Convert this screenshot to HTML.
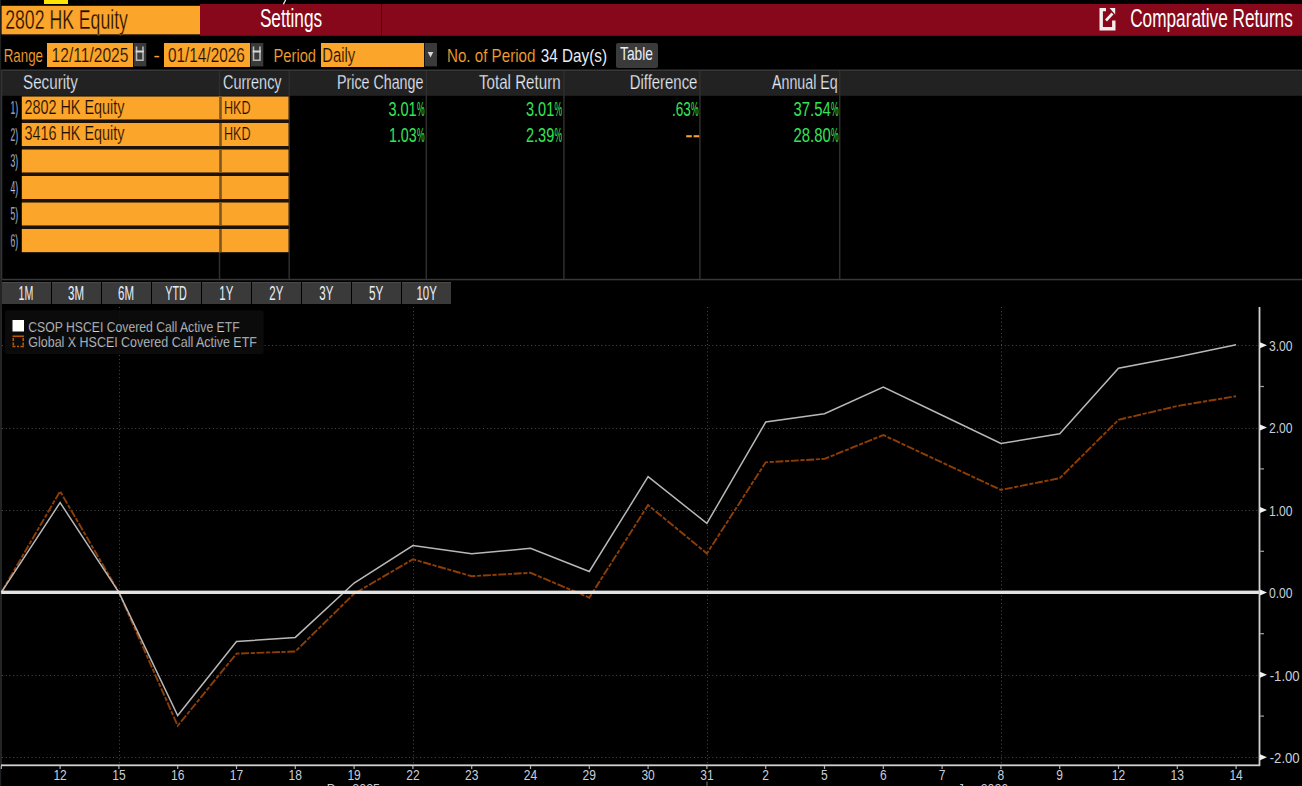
<!DOCTYPE html>
<html><head><meta charset="utf-8"><style>
html,body{margin:0;padding:0;background:#000;width:1302px;height:786px;overflow:hidden}
svg{display:block;font-family:"Liberation Sans", sans-serif}
</style></head><body>
<svg width="1302" height="786" viewBox="0 0 1302 786">
<rect width="1302" height="786" fill="#000"/>
<rect x="44" y="0" width="24" height="4" fill="#ffe600"/>
<rect x="0" y="0" width="1.2" height="786" fill="#1e2124"/>
<rect x="1.6" y="5.8" width="198.4" height="28.2" fill="#fca52b"/>
<rect x="1.6" y="34" width="198.4" height="1.2" fill="#5a3a10"/>
<rect x="200" y="4" width="1102" height="31.8" fill="#87081b"/>
<rect x="381" y="4" width="1" height="32" fill="#55000e"/>
<text x="5.2" y="29" font-size="26.8" fill="#1a1000" text-anchor="start" font-weight="normal" textLength="122.7" lengthAdjust="spacingAndGlyphs" stroke="#fca52b" stroke-width="0.35" >2802 HK Equity</text>
<text x="259.9" y="27.3" font-size="25.2" fill="#ffffff" text-anchor="start" font-weight="normal" textLength="62.2" lengthAdjust="spacingAndGlyphs" >Settings</text>
<path d="M1106 9.6 H1101.2 V28.7 H1113.8 V20.6" stroke="#f4eeee" stroke-width="3.4" fill="none"/>
<path d="M1106 20.5 L1112.5 13.5" stroke="#f4eeee" stroke-width="2.6" fill="none"/>
<path d="M1109.5 7.9 H1115.2 V14.5 Z" fill="#f4eeee"/>
<text x="1130.2" y="27.3" font-size="25" fill="#ffffff" text-anchor="start" font-weight="normal" textLength="162.6" lengthAdjust="spacingAndGlyphs" >Comparative Returns</text>
<text x="3.7" y="62.4" font-size="18.6" fill="#f7a030" text-anchor="start" font-weight="normal" textLength="39.3" lengthAdjust="spacingAndGlyphs" stroke="#000" stroke-width="0.15" >Range</text>
<rect x="47" y="43" width="86" height="24" fill="#fca52b"/>
<text x="51.6" y="62.4" font-size="19.4" fill="#1a1000" text-anchor="start" font-weight="normal" textLength="76.8" lengthAdjust="spacingAndGlyphs" stroke="#fca52b" stroke-width="0.2" >12/11/2025</text>
<rect x="133.7" y="43" width="12.6" height="23.4" fill="#3a3a3a"/><path d="M136.5 46.5 V60.3 H143.0 V46.5" stroke="#b8b8b8" stroke-width="1.6" fill="none"/><rect x="135.7" y="50.5" width="8.1" height="2" fill="#d8d8d8"/>
<rect x="164" y="43" width="86" height="24" fill="#fca52b"/>
<text x="168" y="62.4" font-size="19.4" fill="#1a1000" text-anchor="start" font-weight="normal" textLength="76.8" lengthAdjust="spacingAndGlyphs" stroke="#fca52b" stroke-width="0.2" >01/14/2026</text>
<rect x="250.7" y="43" width="12.6" height="23.4" fill="#3a3a3a"/><path d="M253.5 46.5 V60.3 H260.0 V46.5" stroke="#b8b8b8" stroke-width="1.6" fill="none"/><rect x="252.7" y="50.5" width="8.1" height="2" fill="#d8d8d8"/>
<text x="153.5" y="62.4" font-size="19" fill="#f7a030" text-anchor="start" font-weight="normal" >-</text>
<text x="273.5" y="62.4" font-size="18.6" fill="#f7a030" text-anchor="start" font-weight="normal" textLength="42.5" lengthAdjust="spacingAndGlyphs" stroke="#000" stroke-width="0.15" >Period</text>
<rect x="321" y="43" width="103" height="24" fill="#fca52b"/>
<text x="322.2" y="62.4" font-size="19.4" fill="#1a1000" text-anchor="start" font-weight="normal" textLength="33" lengthAdjust="spacingAndGlyphs" stroke="#fca52b" stroke-width="0.2" >Daily</text>
<rect x="424.7" y="43" width="12.3" height="23.4" fill="#3a3a3a"/>
<path d="M427.7 52 H433.3 L430.5 57.6 Z" fill="#d8d8d8"/>
<text x="447" y="62.4" font-size="18.6" fill="#f7a030" text-anchor="start" font-weight="normal" textLength="88.4" lengthAdjust="spacingAndGlyphs" stroke="#000" stroke-width="0.15" >No. of Period</text>
<text x="540.7" y="62.2" font-size="18.6" fill="#e8eef8" text-anchor="start" font-weight="normal" textLength="66.3" lengthAdjust="spacingAndGlyphs" >34 Day(s)</text>
<rect x="616" y="43" width="42" height="25" rx="2" fill="#3a3a3a"/>
<text x="620" y="59.9" font-size="17.8" fill="#e8eef8" text-anchor="start" font-weight="normal" textLength="33" lengthAdjust="spacingAndGlyphs" >Table</text>
<rect x="2" y="69.5" width="1300" height="2" fill="#383838"/>
<rect x="2" y="71.5" width="1300" height="24.3" fill="#222222"/>
<rect x="0.8" y="69.5" width="1.5" height="210" fill="#333333"/>
<rect x="2" y="278.8" width="1300" height="1.5" fill="#3a3a3a"/>
<rect x="218.75" y="71" width="1.5" height="208" fill="#2e2e2e"/>
<rect x="288.45" y="71" width="1.5" height="208" fill="#2e2e2e"/>
<rect x="425.55" y="71" width="1.5" height="208" fill="#2e2e2e"/>
<rect x="563.15" y="71" width="1.5" height="208" fill="#2e2e2e"/>
<rect x="699.15" y="71" width="1.5" height="208" fill="#2e2e2e"/>
<rect x="838.95" y="71" width="1.5" height="208" fill="#2e2e2e"/>
<text x="23" y="89.4" font-size="20" fill="#e8eef8" text-anchor="start" font-weight="normal" textLength="54.9" lengthAdjust="spacingAndGlyphs" stroke="#222222" stroke-width="0.25" >Security</text>
<text x="223" y="89.4" font-size="20" fill="#e8eef8" text-anchor="start" font-weight="normal" textLength="58.6" lengthAdjust="spacingAndGlyphs" stroke="#222222" stroke-width="0.25" >Currency</text>
<text x="337" y="89.4" font-size="20" fill="#e8eef8" text-anchor="start" font-weight="normal" textLength="86.4" lengthAdjust="spacingAndGlyphs" stroke="#222222" stroke-width="0.25" >Price Change</text>
<text x="479" y="89.4" font-size="20" fill="#e8eef8" text-anchor="start" font-weight="normal" textLength="81.6" lengthAdjust="spacingAndGlyphs" stroke="#222222" stroke-width="0.25" >Total Return</text>
<text x="629.7" y="89.4" font-size="20" fill="#e8eef8" text-anchor="start" font-weight="normal" textLength="67.7" lengthAdjust="spacingAndGlyphs" stroke="#222222" stroke-width="0.25" >Difference</text>
<text x="772" y="89.4" font-size="20" fill="#e8eef8" text-anchor="start" font-weight="normal" textLength="65.7" lengthAdjust="spacingAndGlyphs" stroke="#222222" stroke-width="0.25" >Annual Eq</text>
<rect x="21.8" y="96.5" width="266.7" height="23.2" fill="#fca52b"/>
<rect x="21.8" y="119.7" width="266.7" height="3.3" fill="#1c120a"/>
<rect x="219.2" y="96.5" width="2.6" height="23.2" fill="#7e5621"/>
<text x="10.6" y="114.3" font-size="19" fill="#c8d4ec" text-anchor="start" font-weight="normal" textLength="7.6" lengthAdjust="spacingAndGlyphs" stroke="#000" stroke-width="0.3" >1)</text>
<rect x="21.8" y="123.0" width="266.7" height="23.2" fill="#fca52b"/>
<rect x="21.8" y="146.2" width="266.7" height="3.3" fill="#1c120a"/>
<rect x="219.2" y="123.0" width="2.6" height="23.2" fill="#7e5621"/>
<text x="10.6" y="140.8" font-size="19" fill="#c8d4ec" text-anchor="start" font-weight="normal" textLength="7.6" lengthAdjust="spacingAndGlyphs" stroke="#000" stroke-width="0.3" >2)</text>
<rect x="21.8" y="149.5" width="266.7" height="23.2" fill="#fca52b"/>
<rect x="21.8" y="172.7" width="266.7" height="3.3" fill="#1c120a"/>
<rect x="219.2" y="149.5" width="2.6" height="23.2" fill="#7e5621"/>
<text x="10.6" y="167.3" font-size="19" fill="#c8d4ec" text-anchor="start" font-weight="normal" textLength="7.6" lengthAdjust="spacingAndGlyphs" stroke="#000" stroke-width="0.3" >3)</text>
<rect x="21.8" y="176.0" width="266.7" height="23.2" fill="#fca52b"/>
<rect x="21.8" y="199.2" width="266.7" height="3.3" fill="#1c120a"/>
<rect x="219.2" y="176.0" width="2.6" height="23.2" fill="#7e5621"/>
<text x="10.6" y="193.8" font-size="19" fill="#c8d4ec" text-anchor="start" font-weight="normal" textLength="7.6" lengthAdjust="spacingAndGlyphs" stroke="#000" stroke-width="0.3" >4)</text>
<rect x="21.8" y="202.5" width="266.7" height="23.2" fill="#fca52b"/>
<rect x="21.8" y="225.7" width="266.7" height="3.3" fill="#1c120a"/>
<rect x="219.2" y="202.5" width="2.6" height="23.2" fill="#7e5621"/>
<text x="10.6" y="220.3" font-size="19" fill="#c8d4ec" text-anchor="start" font-weight="normal" textLength="7.6" lengthAdjust="spacingAndGlyphs" stroke="#000" stroke-width="0.3" >5)</text>
<rect x="21.8" y="229.0" width="266.7" height="23.2" fill="#fca52b"/>
<rect x="219.2" y="229.0" width="2.6" height="23.2" fill="#7e5621"/>
<text x="10.6" y="246.8" font-size="19" fill="#c8d4ec" text-anchor="start" font-weight="normal" textLength="7.6" lengthAdjust="spacingAndGlyphs" stroke="#000" stroke-width="0.3" >6)</text>
<text x="24.4" y="113.6" font-size="20" fill="#1a1000" text-anchor="start" font-weight="normal" textLength="100" lengthAdjust="spacingAndGlyphs" stroke="#fca52b" stroke-width="0.2" >2802 HK Equity</text>
<text x="224" y="113.6" font-size="19" fill="#1a1000" text-anchor="start" font-weight="normal" textLength="26.6" lengthAdjust="spacingAndGlyphs" stroke="#fca52b" stroke-width="0.2" >HKD</text>
<text x="24.4" y="140.1" font-size="20" fill="#1a1000" text-anchor="start" font-weight="normal" textLength="100" lengthAdjust="spacingAndGlyphs" stroke="#fca52b" stroke-width="0.2" >3416 HK Equity</text>
<text x="224" y="140.1" font-size="19" fill="#1a1000" text-anchor="start" font-weight="normal" textLength="26.6" lengthAdjust="spacingAndGlyphs" stroke="#fca52b" stroke-width="0.2" >HKD</text>
<text x="388.4" y="115.8" font-size="20" fill="#34e454" text-anchor="start" font-weight="normal" textLength="28.3" lengthAdjust="spacingAndGlyphs" >3.01</text>
<text x="416.9" y="115.8" font-size="20" fill="#34e454" text-anchor="start" font-weight="normal" textLength="7.6" lengthAdjust="spacingAndGlyphs" >%</text>
<text x="526" y="115.8" font-size="20" fill="#34e454" text-anchor="start" font-weight="normal" textLength="28.2" lengthAdjust="spacingAndGlyphs" >3.01</text>
<text x="554.4" y="115.8" font-size="20" fill="#34e454" text-anchor="start" font-weight="normal" textLength="7.6" lengthAdjust="spacingAndGlyphs" >%</text>
<text x="672" y="115.8" font-size="20" fill="#34e454" text-anchor="start" font-weight="normal" textLength="18.9" lengthAdjust="spacingAndGlyphs" >.63</text>
<text x="691.1" y="115.8" font-size="20" fill="#34e454" text-anchor="start" font-weight="normal" textLength="7.6" lengthAdjust="spacingAndGlyphs" >%</text>
<text x="793.6" y="115.8" font-size="20" fill="#34e454" text-anchor="start" font-weight="normal" textLength="37.1" lengthAdjust="spacingAndGlyphs" >37.54</text>
<text x="830.9" y="115.8" font-size="20" fill="#34e454" text-anchor="start" font-weight="normal" textLength="7.6" lengthAdjust="spacingAndGlyphs" >%</text>
<text x="389" y="141.9" font-size="20" fill="#34e454" text-anchor="start" font-weight="normal" textLength="27.7" lengthAdjust="spacingAndGlyphs" >1.03</text>
<text x="416.9" y="141.9" font-size="20" fill="#34e454" text-anchor="start" font-weight="normal" textLength="7.6" lengthAdjust="spacingAndGlyphs" >%</text>
<text x="526" y="141.9" font-size="20" fill="#34e454" text-anchor="start" font-weight="normal" textLength="28.2" lengthAdjust="spacingAndGlyphs" >2.39</text>
<text x="554.4" y="141.9" font-size="20" fill="#34e454" text-anchor="start" font-weight="normal" textLength="7.6" lengthAdjust="spacingAndGlyphs" >%</text>
<rect x="686.2" y="135.2" width="5.6" height="2.1" fill="#f7a030"/><rect x="693.6" y="135.2" width="5.6" height="2.1" fill="#f7a030"/>
<text x="793.6" y="141.9" font-size="20" fill="#34e454" text-anchor="start" font-weight="normal" textLength="37.1" lengthAdjust="spacingAndGlyphs" >28.80</text>
<text x="830.9" y="141.9" font-size="20" fill="#34e454" text-anchor="start" font-weight="normal" textLength="7.6" lengthAdjust="spacingAndGlyphs" >%</text>
<rect x="2" y="282" width="49" height="22" fill="#3a3a3a"/>
<rect x="2" y="282" width="49" height="1" fill="#4a4a4a"/>
<text x="18.6" y="300.1" font-size="20" fill="#e8eef8" text-anchor="start" font-weight="normal" textLength="14.8" lengthAdjust="spacingAndGlyphs" >1M</text>
<rect x="52" y="282" width="49" height="22" fill="#3a3a3a"/>
<rect x="52" y="282" width="49" height="1" fill="#4a4a4a"/>
<text x="68" y="300.1" font-size="20" fill="#e8eef8" text-anchor="start" font-weight="normal" textLength="16" lengthAdjust="spacingAndGlyphs" >3M</text>
<rect x="102" y="282" width="49" height="22" fill="#3a3a3a"/>
<rect x="102" y="282" width="49" height="1" fill="#4a4a4a"/>
<text x="118" y="300.1" font-size="20" fill="#e8eef8" text-anchor="start" font-weight="normal" textLength="16" lengthAdjust="spacingAndGlyphs" >6M</text>
<rect x="152" y="282" width="49" height="22" fill="#3a3a3a"/>
<rect x="152" y="282" width="49" height="1" fill="#4a4a4a"/>
<text x="165.3" y="300.1" font-size="20" fill="#e8eef8" text-anchor="start" font-weight="normal" textLength="21.5" lengthAdjust="spacingAndGlyphs" >YTD</text>
<rect x="202" y="282" width="49" height="22" fill="#3a3a3a"/>
<rect x="202" y="282" width="49" height="1" fill="#4a4a4a"/>
<text x="219.3" y="300.1" font-size="20" fill="#e8eef8" text-anchor="start" font-weight="normal" textLength="14" lengthAdjust="spacingAndGlyphs" >1Y</text>
<rect x="252" y="282" width="49" height="22" fill="#3a3a3a"/>
<rect x="252" y="282" width="49" height="1" fill="#4a4a4a"/>
<text x="269.3" y="300.1" font-size="20" fill="#e8eef8" text-anchor="start" font-weight="normal" textLength="14" lengthAdjust="spacingAndGlyphs" >2Y</text>
<rect x="302" y="282" width="49" height="22" fill="#3a3a3a"/>
<rect x="302" y="282" width="49" height="1" fill="#4a4a4a"/>
<text x="319.3" y="300.1" font-size="20" fill="#e8eef8" text-anchor="start" font-weight="normal" textLength="14" lengthAdjust="spacingAndGlyphs" >3Y</text>
<rect x="352" y="282" width="49" height="22" fill="#3a3a3a"/>
<rect x="352" y="282" width="49" height="1" fill="#4a4a4a"/>
<text x="369" y="300.1" font-size="20" fill="#e8eef8" text-anchor="start" font-weight="normal" textLength="14.4" lengthAdjust="spacingAndGlyphs" >5Y</text>
<rect x="402" y="282" width="49" height="22" fill="#3a3a3a"/>
<rect x="402" y="282" width="49" height="1" fill="#4a4a4a"/>
<text x="416.4" y="300.1" font-size="20" fill="#e8eef8" text-anchor="start" font-weight="normal" textLength="20.4" lengthAdjust="spacingAndGlyphs" >10Y</text>
<rect x="0.5" y="279" width="1.5" height="487" fill="#262626"/>
<line x1="2" y1="345.5" x2="1259" y2="345.5" stroke="#4a4a4a" stroke-width="1" stroke-dasharray="1 2.7"/>
<line x1="2" y1="428.5" x2="1259" y2="428.5" stroke="#4a4a4a" stroke-width="1" stroke-dasharray="1 2.7"/>
<line x1="2" y1="510.5" x2="1259" y2="510.5" stroke="#4a4a4a" stroke-width="1" stroke-dasharray="1 2.7"/>
<line x1="2" y1="675.5" x2="1259" y2="675.5" stroke="#4a4a4a" stroke-width="1" stroke-dasharray="1 2.7"/>
<line x1="2" y1="757.5" x2="1259" y2="757.5" stroke="#4a4a4a" stroke-width="1" stroke-dasharray="1 2.7"/>
<line x1="119.5" y1="307" x2="119.5" y2="765" stroke="#4a4a4a" stroke-width="1" stroke-dasharray="1 2.7"/>
<line x1="413.5" y1="307" x2="413.5" y2="765" stroke="#4a4a4a" stroke-width="1" stroke-dasharray="1 2.7"/>
<line x1="707.5" y1="307" x2="707.5" y2="765" stroke="#4a4a4a" stroke-width="1" stroke-dasharray="1 2.7"/>
<line x1="1001.5" y1="307" x2="1001.5" y2="765" stroke="#4a4a4a" stroke-width="1" stroke-dasharray="1 2.7"/>
<rect x="5" y="310.3" width="258.7" height="43.8" rx="3" fill="#0d0d0d" fill-opacity="0.85"/>
<rect x="12.5" y="320" width="11.5" height="11.5" fill="#ffffff"/>
<rect x="12.5" y="335.5" width="11.5" height="1.6" fill="#b85806"/>
<path d="M13.3 338 V346.5 M23.2 338 V346.5" stroke="#b85806" stroke-width="1.6" stroke-dasharray="3 1.5"/>
<path d="M12.5 346.5 H15.5 M17 346.5 H19 M20.5 346.5 H24" stroke="#b85806" stroke-width="1.6"/>
<path d="M285.6 0 L283.4 4.2" stroke="#e8ecf4" stroke-width="1.3"/>
<text x="28.3" y="331.7" font-size="14" fill="#d0d4dc" text-anchor="start" font-weight="normal" textLength="211.3" lengthAdjust="spacingAndGlyphs" stroke="#0d0d0d" stroke-width="0.25" >CSOP HSCEI Covered Call Active ETF</text>
<text x="28.3" y="347.3" font-size="14" fill="#d0d4dc" text-anchor="start" font-weight="normal" textLength="228.6" lengthAdjust="spacingAndGlyphs" stroke="#0d0d0d" stroke-width="0.25" >Global X HSCEI Covered Call Active ETF</text>
<polyline points="1.3,592.4 60.1,491.3 118.9,592.4 177.7,725.8 236.5,653.6 295.3,651.5 354.1,593.7 412.9,559.3 471.7,576.2 530.5,572.8 589.3,597.7 648.1,505.0 706.9,553.5 765.7,462.3 824.5,458.9 883.3,435.0 942.1,462.5 1000.9,489.9 1059.7,478.2 1118.5,419.8 1177.3,406.0 1236.1,396.2" fill="none" stroke="#8e3e05" stroke-width="1.9" stroke-dasharray="8 1.6 4.2 1.6"/>
<polyline points="1.3,592.4 60.1,502.6 118.9,592.4 177.7,715.5 236.5,641.5 295.3,637.4 354.1,583.0 412.9,545.5 471.7,553.8 530.5,548.3 589.3,571.5 648.1,476.7 706.9,523.4 765.7,422.0 824.5,413.8 883.3,387.0 942.1,415.2 1000.9,443.5 1059.7,433.7 1118.5,368.2 1177.3,357.0 1236.1,344.8" fill="none" stroke="#b8b8b8" stroke-width="1.5"/>
<rect x="1.2" y="590.6" width="1258" height="3.4" fill="#e2e2e2"/>
<rect x="1258.6" y="307" width="1.8" height="459" fill="#d0d0d0"/>
<rect x="1" y="764.4" width="1259" height="1.8" fill="#d0d0d0"/>
<path d="M1260 342.2 L1267 345.2 L1260 348.2 Z" fill="#f0f0f0"/>
<text x="1269" y="350.8999999999999" font-size="14.5" fill="#c8ced8" text-anchor="start" font-weight="normal" textLength="23.6" lengthAdjust="spacingAndGlyphs" >3.00</text>
<path d="M1260 424.6 L1267 427.6 L1260 430.6 Z" fill="#f0f0f0"/>
<text x="1269" y="433.29999999999995" font-size="14.5" fill="#c8ced8" text-anchor="start" font-weight="normal" textLength="23.6" lengthAdjust="spacingAndGlyphs" >2.00</text>
<path d="M1260 507.0 L1267 510.0 L1260 513.0 Z" fill="#f0f0f0"/>
<text x="1269" y="515.7" font-size="14.5" fill="#c8ced8" text-anchor="start" font-weight="normal" textLength="23.6" lengthAdjust="spacingAndGlyphs" >1.00</text>
<path d="M1260 589.4 L1267 592.4 L1260 595.4 Z" fill="#f0f0f0"/>
<text x="1269" y="598.1" font-size="14.5" fill="#c8ced8" text-anchor="start" font-weight="normal" textLength="23.6" lengthAdjust="spacingAndGlyphs" >0.00</text>
<path d="M1260 671.8 L1267 674.8 L1260 677.8 Z" fill="#f0f0f0"/>
<text x="1269.7" y="680.5" font-size="14.5" fill="#c8ced8" text-anchor="start" font-weight="normal" textLength="30" lengthAdjust="spacingAndGlyphs" >-1.00</text>
<path d="M1260 754.2 L1267 757.2 L1260 760.2 Z" fill="#f0f0f0"/>
<text x="1269.7" y="762.9000000000001" font-size="14.5" fill="#c8ced8" text-anchor="start" font-weight="normal" textLength="30" lengthAdjust="spacingAndGlyphs" >-2.00</text>
<rect x="1260" y="385.9" width="4" height="1.2" fill="#a0a0a0"/>
<rect x="1260" y="468.3" width="4" height="1.2" fill="#a0a0a0"/>
<rect x="1260" y="550.7" width="4" height="1.2" fill="#a0a0a0"/>
<rect x="1260" y="633.1" width="4" height="1.2" fill="#a0a0a0"/>
<rect x="1260" y="715.5" width="4" height="1.2" fill="#a0a0a0"/>
<rect x="0.7" y="766" width="1.2" height="3" fill="#b0b0b0"/>
<rect x="59.5" y="766" width="1.2" height="3" fill="#b0b0b0"/>
<text x="53.4" y="780.2" font-size="15.5" fill="#c8ced8" text-anchor="start" font-weight="normal" textLength="13.4" lengthAdjust="spacingAndGlyphs" >12</text>
<rect x="118.3" y="766" width="1.2" height="3" fill="#b0b0b0"/>
<text x="112.2" y="780.2" font-size="15.5" fill="#c8ced8" text-anchor="start" font-weight="normal" textLength="13.4" lengthAdjust="spacingAndGlyphs" >15</text>
<rect x="177.1" y="766" width="1.2" height="3" fill="#b0b0b0"/>
<text x="171.0" y="780.2" font-size="15.5" fill="#c8ced8" text-anchor="start" font-weight="normal" textLength="13.4" lengthAdjust="spacingAndGlyphs" >16</text>
<rect x="235.9" y="766" width="1.2" height="3" fill="#b0b0b0"/>
<text x="229.8" y="780.2" font-size="15.5" fill="#c8ced8" text-anchor="start" font-weight="normal" textLength="13.4" lengthAdjust="spacingAndGlyphs" >17</text>
<rect x="294.7" y="766" width="1.2" height="3" fill="#b0b0b0"/>
<text x="288.6" y="780.2" font-size="15.5" fill="#c8ced8" text-anchor="start" font-weight="normal" textLength="13.4" lengthAdjust="spacingAndGlyphs" >18</text>
<rect x="353.5" y="766" width="1.2" height="3" fill="#b0b0b0"/>
<text x="347.4" y="780.2" font-size="15.5" fill="#c8ced8" text-anchor="start" font-weight="normal" textLength="13.4" lengthAdjust="spacingAndGlyphs" >19</text>
<rect x="412.3" y="766" width="1.2" height="3" fill="#b0b0b0"/>
<text x="406.2" y="780.2" font-size="15.5" fill="#c8ced8" text-anchor="start" font-weight="normal" textLength="13.4" lengthAdjust="spacingAndGlyphs" >22</text>
<rect x="471.1" y="766" width="1.2" height="3" fill="#b0b0b0"/>
<text x="465.0" y="780.2" font-size="15.5" fill="#c8ced8" text-anchor="start" font-weight="normal" textLength="13.4" lengthAdjust="spacingAndGlyphs" >23</text>
<rect x="529.9" y="766" width="1.2" height="3" fill="#b0b0b0"/>
<text x="523.8" y="780.2" font-size="15.5" fill="#c8ced8" text-anchor="start" font-weight="normal" textLength="13.4" lengthAdjust="spacingAndGlyphs" >24</text>
<rect x="588.7" y="766" width="1.2" height="3" fill="#b0b0b0"/>
<text x="582.6" y="780.2" font-size="15.5" fill="#c8ced8" text-anchor="start" font-weight="normal" textLength="13.4" lengthAdjust="spacingAndGlyphs" >29</text>
<rect x="647.5" y="766" width="1.2" height="3" fill="#b0b0b0"/>
<text x="641.4" y="780.2" font-size="15.5" fill="#c8ced8" text-anchor="start" font-weight="normal" textLength="13.4" lengthAdjust="spacingAndGlyphs" >30</text>
<rect x="706.3" y="766" width="1.2" height="3" fill="#b0b0b0"/>
<text x="700.2" y="780.2" font-size="15.5" fill="#c8ced8" text-anchor="start" font-weight="normal" textLength="13.4" lengthAdjust="spacingAndGlyphs" >31</text>
<rect x="765.1" y="766" width="1.2" height="3" fill="#b0b0b0"/>
<text x="762.3" y="780.2" font-size="15.5" fill="#c8ced8" text-anchor="start" font-weight="normal" textLength="6.7" lengthAdjust="spacingAndGlyphs" >2</text>
<rect x="823.9" y="766" width="1.2" height="3" fill="#b0b0b0"/>
<text x="821.1" y="780.2" font-size="15.5" fill="#c8ced8" text-anchor="start" font-weight="normal" textLength="6.7" lengthAdjust="spacingAndGlyphs" >5</text>
<rect x="882.7" y="766" width="1.2" height="3" fill="#b0b0b0"/>
<text x="879.9" y="780.2" font-size="15.5" fill="#c8ced8" text-anchor="start" font-weight="normal" textLength="6.7" lengthAdjust="spacingAndGlyphs" >6</text>
<rect x="941.5" y="766" width="1.2" height="3" fill="#b0b0b0"/>
<text x="938.7" y="780.2" font-size="15.5" fill="#c8ced8" text-anchor="start" font-weight="normal" textLength="6.7" lengthAdjust="spacingAndGlyphs" >7</text>
<rect x="1000.3" y="766" width="1.2" height="3" fill="#b0b0b0"/>
<text x="997.5" y="780.2" font-size="15.5" fill="#c8ced8" text-anchor="start" font-weight="normal" textLength="6.7" lengthAdjust="spacingAndGlyphs" >8</text>
<rect x="1059.1" y="766" width="1.2" height="3" fill="#b0b0b0"/>
<text x="1056.3" y="780.2" font-size="15.5" fill="#c8ced8" text-anchor="start" font-weight="normal" textLength="6.7" lengthAdjust="spacingAndGlyphs" >9</text>
<rect x="1117.9" y="766" width="1.2" height="3" fill="#b0b0b0"/>
<text x="1111.8" y="780.2" font-size="15.5" fill="#c8ced8" text-anchor="start" font-weight="normal" textLength="13.4" lengthAdjust="spacingAndGlyphs" >12</text>
<rect x="1176.7" y="766" width="1.2" height="3" fill="#b0b0b0"/>
<text x="1170.6" y="780.2" font-size="15.5" fill="#c8ced8" text-anchor="start" font-weight="normal" textLength="13.4" lengthAdjust="spacingAndGlyphs" >13</text>
<rect x="1235.5" y="766" width="1.2" height="3" fill="#b0b0b0"/>
<text x="1229.4" y="780.2" font-size="15.5" fill="#c8ced8" text-anchor="start" font-weight="normal" textLength="13.4" lengthAdjust="spacingAndGlyphs" >14</text>
<rect x="706.3" y="781.5" width="1.4" height="4.5" fill="#505050"/>
<text x="326.7" y="793" font-size="13" fill="#c8ced8" text-anchor="start" font-weight="normal" textLength="53.3" lengthAdjust="spacingAndGlyphs" >Dec 2025</text>
<text x="957.7" y="793" font-size="13" fill="#c8ced8" text-anchor="start" font-weight="normal" textLength="50.3" lengthAdjust="spacingAndGlyphs" >Jan 2026</text>
</svg></body></html>
